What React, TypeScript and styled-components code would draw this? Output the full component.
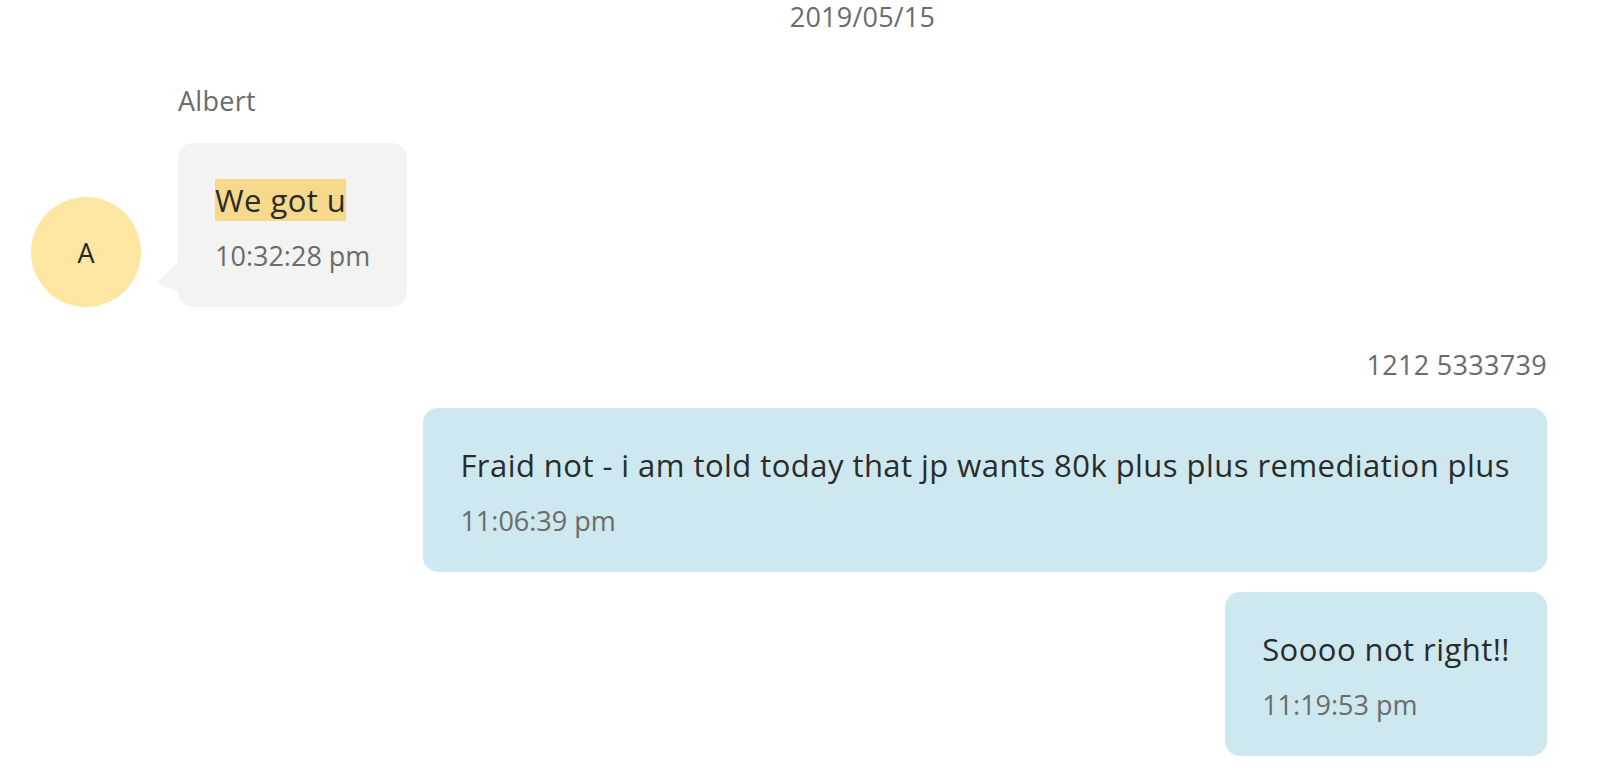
import React from "react";
import styled, { createGlobalStyle } from "styled-components";

const GlobalStyle = createGlobalStyle`
  html, body {
    margin: 0;
    padding: 0;
    background: #ffffff;
  }
  body {
    font-family: "Open Sans", "Noto Sans", sans-serif;
    color: #2b2b2b;
  }
`;

const Thread = styled.div`
  display: flex;
  flex-direction: column;
  padding: 0 53px 0 31px;
  width: 1600px;
  box-sizing: border-box;
`;

const DateDivider = styled.div`
  padding-left: 147px;
  text-align: center;
  font-size: 27px;
  line-height: 34px;
  letter-spacing: 0.2px;
  color: #6b6b6b;
`;

const IncomingRow = styled.div`
  display: flex;
  align-items: flex-end;
  gap: 37px;
  margin-top: 50px;
`;

const Avatar = styled.div`
  width: 110px;
  height: 110px;
  flex: none;
  border-radius: 50%;
  background: #fde6a1;
  display: flex;
  align-items: center;
  justify-content: center;
  font-size: 27px;
  color: #262626;
`;

const MessageColumn = styled.div<{ $align: "start" | "end" }>`
  display: flex;
  flex-direction: column;
  align-items: ${(p) => (p.$align === "end" ? "flex-end" : "flex-start")};
`;

const SenderName = styled.div`
  font-size: 27px;
  line-height: 34px;
  letter-spacing: 0.3px;
  color: #6b6b6b;
`;

const Bubble = styled.div<{ $variant: "in" | "out"; $gap: number }>`
  position: relative;
  display: inline-flex;
  flex-direction: column;
  box-sizing: border-box;
  margin-top: ${(p) => p.$gap}px;
  padding: 35px 37px 31px 37px;
  border-radius: 15px;
  background: ${(p) => (p.$variant === "in" ? "#f3f3f1" : "#cde9ef")};

  ${(p) =>
    p.$variant === "in"
      ? `
    &::before {
      content: "";
      position: absolute;
      left: -22px;
      bottom: 16px;
      width: 23px;
      height: 30px;
      background: #f3f3f1;
      clip-path: polygon(0 22px, 100% 0, 100% 100%);
    }
  `
      : ""}
`;

const BodyText = styled.div`
  font-size: 31px;
  line-height: 44px;
  letter-spacing: 0.45px;
  color: #2b2b2b;
  white-space: nowrap;
`;

const Highlight = styled.mark`
  background: #f6d98b;
  color: #2b2b2b;
`;

const TimeStamp = styled.div`
  margin-top: 14px;
  font-size: 27px;
  line-height: 40px;
  color: #6b6b6b;
  white-space: nowrap;
`;

const OutgoingGroup = styled(MessageColumn)`
  margin-top: 41px;
`;

export default function App() {
  return (
    <>
      <GlobalStyle />
      <Thread>
        <DateDivider>2019/05/15</DateDivider>

        <IncomingRow>
          <Avatar>A</Avatar>
          <MessageColumn $align="start">
            <SenderName>Albert</SenderName>
            <Bubble $variant="in" $gap={25}>
              <BodyText>
                <Highlight>We got u</Highlight>
              </BodyText>
              <TimeStamp>10:32:28 pm</TimeStamp>
            </Bubble>
          </MessageColumn>
        </IncomingRow>

        <OutgoingGroup $align="end">
          <SenderName>1212 5333739</SenderName>
          <Bubble $variant="out" $gap={26}>
            <BodyText>
              Fraid not - i am told today that jp wants 80k plus plus remediation plus
            </BodyText>
            <TimeStamp>11:06:39 pm</TimeStamp>
          </Bubble>
          <Bubble $variant="out" $gap={20}>
            <BodyText>Soooo not right!!</BodyText>
            <TimeStamp>11:19:53 pm</TimeStamp>
          </Bubble>
        </OutgoingGroup>
      </Thread>
    </>
  );
}
